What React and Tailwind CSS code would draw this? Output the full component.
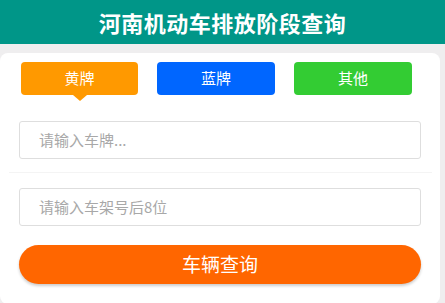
export default function App() {
  const font = { fontFamily: '"Noto Sans CJK SC", "Noto Sans", sans-serif' };
  return (
    <div className="w-[445px] h-[303px] bg-[#efeeef] overflow-hidden" style={font}>
      <div className="h-[44px] bg-[#009688] flex items-center justify-center">
        <span className="text-white text-[22px] font-bold leading-none tracking-[0.5px]">河南机动车排放阶段查询</span>
      </div>
      <div className="mt-[9px] w-[440px] h-[251px] bg-white rounded-[8px] flex flex-col">
        <div className="flex pl-[21px] gap-[19px] mt-[9px]">
          <div className="relative w-[117px] h-[33px] rounded-[4px] bg-[#ff9900] flex items-center justify-center text-white text-[15px]">
            黄牌
            <div className="absolute left-1/2 -translate-x-1/2 top-full w-0 h-0 border-x-[7px] border-x-transparent border-t-[6px] border-t-[#ff9900]"></div>
          </div>
          <div className="w-[118px] h-[33px] rounded-[4px] bg-[#0066ff] flex items-center justify-center text-white text-[15px]">蓝牌</div>
          <div className="w-[118px] h-[33px] rounded-[4px] bg-[#33cc33] flex items-center justify-center text-white text-[15px]">其他</div>
        </div>
        <div className="ml-[19px] mt-[26px] w-[402px] h-[38px] border border-[#dedede] rounded-[3px] flex items-center pl-[19px] text-[15px] text-[#a8a8a8]">请输入车牌...</div>
        <div className="ml-[9px] mt-[13px] w-[423px] h-[1px] bg-[#f4f4f4]"></div>
        <div className="ml-[19px] mt-[15px] w-[402px] h-[38px] border border-[#dedede] rounded-[3px] flex items-center pl-[19px] text-[15px] text-[#a8a8a8]">请输入车架号后8位</div>
        <div className="ml-[19px] mt-[19px] w-[402px] h-[39px] rounded-full bg-[#ff6600] shadow-[0_2px_3px_rgba(0,0,0,0.2)] flex items-center justify-center text-white text-[19px]">车辆查询</div>
      </div>
    </div>
  );
}
